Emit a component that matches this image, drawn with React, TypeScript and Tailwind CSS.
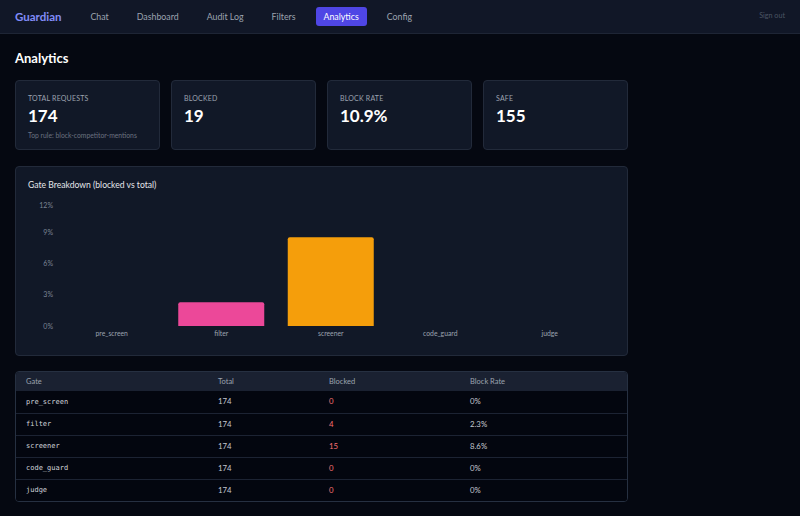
const font = { fontFamily: 'Lato, "Noto Sans", sans-serif' };
const mono = { fontFamily: '"DejaVu Sans Mono", "Liberation Mono", monospace' };

const navItems = ['Chat', 'Dashboard', 'Audit Log', 'Filters', 'Analytics', 'Config'];

const stats = [
  { label: 'TOTAL REQUESTS', value: '174', sub: 'Top rule: block-competitor-mentions' },
  { label: 'BLOCKED', value: '19' },
  { label: 'BLOCK RATE', value: '10.9%' },
  { label: 'SAFE', value: '155' },
];

const gates = [
  { name: 'pre_screen', total: 174, blocked: 0, rate: '0%', pct: 0, color: '#6366f1' },
  { name: 'filter', total: 174, blocked: 4, rate: '2.3%', pct: 2.3, color: '#ec4899' },
  { name: 'screener', total: 174, blocked: 15, rate: '8.6%', pct: 8.6, color: '#f59e0b' },
  { name: 'code_guard', total: 174, blocked: 0, rate: '0%', pct: 0, color: '#10b981' },
  { name: 'judge', total: 174, blocked: 0, rate: '0%', pct: 0, color: '#06b6d4' },
];

// y position of tick labels (svg coords)
const ticks = [
  { t: '12%', y: 10 },
  { t: '9%', y: 37 },
  { t: '6%', y: 68 },
  { t: '3%', y: 99 },
  { t: '0%', y: 131 },
];

function Chart() {
  // svg origin at page (15, 194)
  const base = 131;
  const perPct = 10.33;
  const bandStart = 41;
  const band = 109.5;
  return (
    <svg width={612} height={148} className="block">
      {ticks.map((k) => (
        <text key={k.t} x={37} y={k.y + 2.5} textAnchor="end" fontSize={7} fill="#7b8494" style={font}>
          {k.t}
        </text>
      ))}
      {gates.map((g, i) => {
        const cx = bandStart + band * i + band / 2;
        const h = g.pct * perPct;
        return (
          <g key={g.name}>
            {h > 0 && (
              <path
                d={`M${cx - 43} ${base} V${base - h + 2} Q${cx - 43} ${base - h} ${cx - 41} ${base - h} H${cx + 41} Q${cx + 43} ${base - h} ${cx + 43} ${base - h + 2} V${base} Z`}
                fill={g.color}
              />
            )}
            <text x={cx} y={base + 9.5} textAnchor="middle" fontSize={6.8} fill="#9ca3af" style={font}>
              {g.name}
            </text>
          </g>
        );
      })}
    </svg>
  );
}

export default function App() {
  return (
    <div className="w-[800px] h-[516px] overflow-hidden bg-[#050811] text-white" style={font}>
      {/* nav */}
      <div className="h-[34px] flex items-center px-[15px] bg-[#111727] border-b border-[#1e2535]">
        <div className="text-[11.5px] font-bold text-[#818cf8] mr-[21px]">Guardian</div>
        <div className="flex items-center gap-[12px]">
          {navItems.map((n) =>
            n === 'Analytics' ? (
              <div key={n} className="px-[8px] h-[19px] flex items-center rounded-[3px] bg-[#4f46e5] text-[8.8px] text-white">
                {n}
              </div>
            ) : (
              <div key={n} className="px-[8px] text-[8.8px] text-[#9ca3af]">
                {n}
              </div>
            ),
          )}
        </div>
        <div className="ml-auto text-[7.2px] text-[#4b5563]">Sign out</div>
      </div>

      <div className="px-[15px] w-[643px]">
        <h1 className="text-[13px] font-bold mt-[16px] mb-[14px] leading-[16px]">Analytics</h1>

        <div className="grid grid-cols-4 gap-[11px]">
          {stats.map((s) => (
            <div key={s.label} className="h-[70px] rounded-[4px] bg-[#111827] border border-[#222a3a] px-[12px] pt-[12px]">
              <div className="text-[7px] tracking-[0.2px] text-[#9ca3af] leading-[10px]">{s.label}</div>
              <div className="text-[17px] font-bold leading-[20px] mt-[3px]">{s.value}</div>
              {s.sub && <div className="text-[6.8px] text-[#6b7280] mt-[4px] leading-[10px]">{s.sub}</div>}
            </div>
          ))}
        </div>

        <div className="mt-[16px] h-[190px] rounded-[4px] bg-[#111827] border border-[#222a3a]">
          <div className="px-[12px] pt-[12px] text-[8.6px] text-[#e5e7eb] leading-[12px]">Gate Breakdown (blocked vs total)</div>
          <div className="mt-[4px]">
            <Chart />
          </div>
        </div>

        <div className="mt-[15px] rounded-[4px] border border-[#263041] overflow-hidden">
          <div className="grid grid-cols-[202px_111px_141px_1fr] h-[19px] items-center bg-[#1a2131] text-[7.5px] text-[#9ca3af]">
            <div className="pl-[10px]">Gate</div>
            <div>Total</div>
            <div>Blocked</div>
            <div>Block Rate</div>
          </div>
          {gates.map((g, i) => (
            <div
              key={g.name}
              className={`grid grid-cols-[202px_111px_141px_1fr] h-[22px] items-center bg-[#03060f] text-[7.8px] ${i > 0 ? 'border-t border-[#1c2333]' : ''}`}
            >
              <div className="pl-[10px] text-[#d1d5db] text-[7px]" style={mono}>
                {g.name}
              </div>
              <div className="text-[#c4c8cf]">{g.total}</div>
              <div className="text-[#f87171]">{g.blocked}</div>
              <div className="text-[#c4c8cf]">{g.rate}</div>
            </div>
          ))}
        </div>
      </div>
    </div>
  );
}
